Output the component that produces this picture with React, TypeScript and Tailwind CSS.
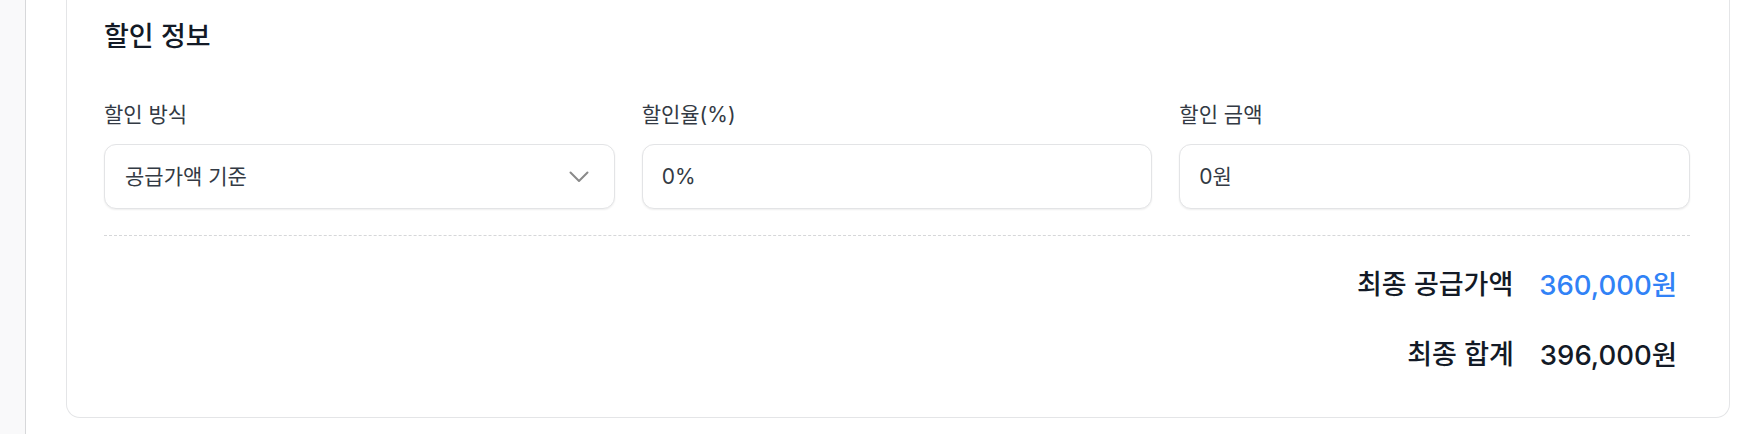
import React from "react";

const Chevron = () => (
  <svg width="20" height="12" viewBox="0 0 20 12" fill="none" className="shrink-0">
    <polyline points="1.5,1.5 10,10 18.5,1.5" stroke="#8a8a8a" strokeWidth="2" strokeLinecap="round" strokeLinejoin="round" />
  </svg>
);

function Field({ label, children }: { label: string; children: React.ReactNode }) {
  return (
    <div className="flex flex-col">
      <div className="h-[26px] text-[21px] leading-[26px] text-[#333a44] mb-[16px]">{label}</div>
      {children}
    </div>
  );
}

export default function App() {
  return (
    <div className="flex h-[434px] w-full bg-white font-['Inter','Noto_Sans_CJK_KR',sans-serif]">
      <div className="w-[26px] shrink-0 bg-[#f9f9fa] border-r border-[#d7d8da]" />
      <div className="flex-1 pl-[40px] pr-[26px]">
        <div className="rounded-b-[14px] border border-t-0 border-[#e4e5e7] bg-white pl-[37px] pr-[39px] pt-[21px] pb-[45px]">
          <div className="h-[32px] text-[27px] leading-[32px] font-medium text-[#131a26]">할인 정보</div>
          <div className="mt-[49px] grid grid-cols-3 gap-x-[27px]">
            <Field label="할인 방식">
              <div className="flex h-[65px] items-center justify-between rounded-[12px] border border-[#e3e4e6] bg-white pl-[20px] pr-[25px] shadow-[0_1px_2px_rgba(0,0,0,0.07)]">
                <span className="text-[21px] text-[#333a44]">공급가액 기준</span>
                <Chevron />
              </div>
            </Field>
            <Field label="할인율(%)">
              <div className="flex h-[65px] items-center rounded-[12px] border border-[#e3e4e6] bg-white pl-[19px] shadow-[0_1px_2px_rgba(0,0,0,0.07)]">
                <span className="text-[21px] text-[#333a44]">0%</span>
              </div>
            </Field>
            <Field label="할인 금액">
              <div className="flex h-[65px] items-center rounded-[12px] border border-[#e3e4e6] bg-white pl-[19px] shadow-[0_1px_2px_rgba(0,0,0,0.07)]">
                <span className="text-[21px] text-[#333a44]">0원</span>
              </div>
            </Field>
          </div>
          <div className="mt-[26px] border-t border-dashed border-[#d6d7d9]" />
          <div className="flex flex-col items-end gap-y-[36px] pt-[32px] pr-[13px]">
            <div className="flex h-[34px] items-center gap-x-[26px] leading-[34px]">
              <span className="text-[27px] font-medium text-[#131a26]">최종 공급가액</span>
              <span className="text-[27.5px] font-medium text-[#3182f6]">360,000원</span>
            </div>
            <div className="flex h-[34px] items-center gap-x-[26px] leading-[34px]">
              <span className="text-[27px] font-medium text-[#131a26]">최종 합계</span>
              <span className="text-[27.5px] font-medium text-[#131a26]">396,000원</span>
            </div>
          </div>
        </div>
      </div>
    </div>
  );
}
